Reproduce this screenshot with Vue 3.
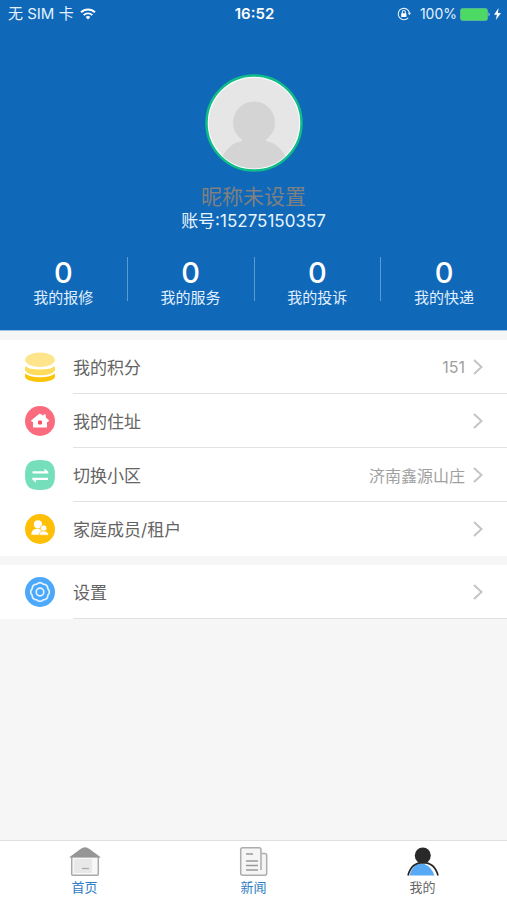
<script setup>
const stats = [
  { label: '我的报修', value: 0 },
  { label: '我的服务', value: 0 },
  { label: '我的投诉', value: 0 },
  { label: '我的快递', value: 0 },
]

const groups = [
  [
    { icon: 'coins', label: '我的积分', value: '151' },
    { icon: 'home', label: '我的住址' },
    { icon: 'swap', label: '切换小区', value: '济南鑫源山庄' },
    { icon: 'family', label: '家庭成员/租户' },
  ],
  [{ icon: 'gear', label: '设置' }],
]

const petals = Array.from({ length: 73 }, (_, i) => {
  const a = (i / 72) * Math.PI * 2
  const r = 8.4 + 0.9 * Math.abs(Math.cos(a * 4))
  return `${(15 + r * Math.sin(a)).toFixed(2)},${(15 - r * Math.cos(a)).toFixed(2)}`
}).join(' ')
</script>

<template>
  <div class="page">
    <header class="hero">
      <div class="status">
        <div class="side">
          <span>无 SIM 卡</span>
          <svg width="16" height="12" viewBox="0 0 16 12" fill="none" stroke="#fff" stroke-width="1.9">
            <path d="M1 4.3a10 10 0 0 1 14 0" />
            <path d="M3.7 7.1a6.2 6.2 0 0 1 8.600 0" />
            <path d="M8 11.6 5.6 9.1a3.4 3.4 0 0 1 4.800 0z" fill="#fff" stroke="none" />
          </svg>
        </div>
        <time class="clock">16:52</time>
        <div class="side end">
          <svg width="14" height="14" viewBox="0 0 14 14" fill="none" stroke="#e4f2ff">
            <path d="M11.2 10.8A5.7 5.7 0 1 1 12.5 6" stroke-width="1.1" />
            <path d="M10.8 5.8h3.200l-1.6 2.5z" fill="#e4f2ff" stroke="none" />
            <path d="M5.3 6.5V5a1.5 1.5 0 0 1 3 0v1.5" stroke-width="1.1" />
            <rect x="4.2" y="6.2" width="5.200" height="3.8" rx=".5" fill="#fff" stroke="none" />
          </svg>
          <span class="percent">100%</span>
          <svg width="31" height="13" viewBox="0 0 31 13">
            <rect x=".5" y=".5" width="27" height="12" rx="2" fill="#4cd964" stroke="#6fc79c" stroke-width=".6" />
            <path d="M28.6 4.3q1.9 2.2 0 4.4z" fill="#d5ebfa" />
          </svg>
          <svg width="7" height="12" viewBox="0 0 7 12">
            <path d="M4.6 0 0 6.7h2.900L1.8 12 7 4.9H3.900z" fill="#fff" />
          </svg>
        </div>
      </div>

      <svg class="avatar" width="98" height="98" viewBox="0 0 98 98" role="img" aria-label="头像">
        <defs>
          <clipPath id="face"><circle cx="49" cy="49" r="45.5" /></clipPath>
        </defs>
        <circle cx="49" cy="49" r="47.500" fill="#fff" stroke="#10bd88" stroke-width="2.500" />
        <circle cx="49" cy="49" r="45.2" fill="#e6e6e6" />
        <g clip-path="url(#face)" fill="#d4d4d4">
          <circle cx="49" cy="48.5" r="21" />
          <path d="M37 62h24v5c9 1.500 15 7 20 16v15H17V83c5-9 11-14.500 20-16z" />
        </g>
      </svg>
      <h1 class="nickname">昵称未设置</h1>
      <p class="account">账号:15275150357</p>

      <div class="stats">
        <a v-for="s in stats" :key="s.label" class="stat" href="#">
          <strong>{{ s.value }}</strong>
          <span>{{ s.label }}</span>
        </a>
      </div>
    </header>

    <main class="content">
      <nav v-for="(group, g) in groups" :key="g" class="group">
        <a v-for="item in group" :key="item.label" class="row" href="#">
          <svg width="30" height="30" viewBox="0 0 30 30">
            <g v-if="item.icon === 'coins'">
              <path d="M0 21.5Q4 25.200 15 25.200T30 21.500v3c0 3-6.500 5.500-15 5.500S0 27.500 0 24.500z" fill="#fbc50b" />
              <path d="M0 14Q4 17.500 15 17.500T30 14v3.5c0 3.500-6.500 5.800-15 5.800S0 21 0 17.500z" fill="#fddb5c" />
              <ellipse cx="15" cy="7.8" rx="14.800" ry="7.300" fill="#fee48b" />
            </g>
            <g v-else-if="item.icon === 'home'">
              <circle cx="15" cy="15" r="15" fill="#fb6b7e" />
              <path d="M14.800 7.500l3.500 2.200V8.500h2.500v2.900l3.400 3-1.200 1.600H22V21.500H8V16h-1L6 14.400z" fill="#fff" />
              <rect x="13" y="14.5" width="4" height="4" rx="1" fill="#fb5268" />
            </g>
            <g v-else-if="item.icon === 'swap'">
              <path d="M15 0c11 0 15 4 15 15s-4 15-15 15S0 26 0 15 4 0 15 0z" fill="#75debb" />
              <path d="M7.500 11.300H19.500V8.500l3.800 3.300v1.700H7.500zM23 17.700H7.300v1.700l3.800 3.300v-2.800H23z" fill="#fff" />
            </g>
            <g v-else-if="item.icon === 'family'">
              <circle cx="15" cy="15" r="15" fill="#fdbf07" />
              <g fill="#fff">
                <circle cx="13" cy="10.3" r="4.100" />
                <path d="M6.3 20.700c0-4 2.500-6 6.200-6 2.300 0 4 .8 5 2.200l-1.500 3.800z" />
                <g stroke="#fdbf07" stroke-width=".7">
                  <circle cx="18.600" cy="14.200" r="3.200" />
                  <path d="M14.2 21.200c.1-3 1.600-4.200 4.500-4.200s4.800 1.400 5 4.200z" />
                </g>
              </g>
            </g>
            <g v-else>
              <circle cx="15" cy="15" r="15" fill="#4ba8fa" />
              <polygon :points="petals" fill="none" stroke="#e4f3ff" stroke-width="1.7" />
              <circle cx="15" cy="15" r="3.8" fill="none" stroke="#e4f3ff" stroke-width="1.7" />
            </g>
          </svg>
          <span class="cell">
            <span class="label">{{ item.label }}</span>
            <span v-if="item.value" class="value">{{ item.value }}</span>
            <svg width="10" height="16" viewBox="0 0 10 16" fill="none" stroke="#c4c4c4" stroke-width="2">
              <path d="M1 1l7.5 7L1 15" />
            </svg>
          </span>
        </a>
      </nav>
    </main>

    <nav class="tabs">
      <a class="tab" href="#">
        <svg width="32" height="30" viewBox="0 0 32 30">
          <rect x="2.7" y="9.5" width="26.6" height="18.8" rx="1" fill="#f7f7f7" stroke="#a9a9a9" stroke-width="1.5" />
          <rect x="5" y="12" width="18" height="14" fill="#e8e8e8" />
          <path d="M0 10.5 11.5 2q4.500-3.500 9 0L32 10.5z" fill="#969696" />
          <path d="M13 21.500h7" stroke="#aaa" stroke-width="1.3" />
        </svg>
        <span>首页</span>
      </a>
      <a class="tab" href="#">
        <svg width="32" height="30" viewBox="0 0 32 30" fill="none" stroke="#adadad" stroke-width="1.5">
          <path d="M24 6.500h2.700q2 0 2 2v17.800q0 2-2 2H5q-2.300 0-2.300-2V2.500Q2.700.8 4.500.8h16.600q1.900 0 1.900 1.900v3.800" fill="#f5f5f5" />
          <path d="M23 6v17" />
          <path d="M8 7h7M8 14h12M8 18.500h12M8 23h12" stroke="#999" />
        </svg>
        <span>新闻</span>
      </a>
      <a class="tab current" href="#" aria-current="page">
        <svg width="32" height="30" viewBox="0 0 32 30">
          <path d="M2.500 28.500C5 20 9 16.500 15 16.500c7 0 11 5 13 12z" fill="#58a9f5" />
          <path d="M18 16.800c5 1.500 8.200 5.500 10 11.700" fill="none" stroke="#fff" stroke-width="1.300" />
          <path d="M1 28.500C3.500 19 9 15.700 16 15.700S28.500 19 31 28.500" fill="none" stroke="#252525" stroke-width="1.700" />
          <circle cx="15.8" cy="8.500" r="8" fill="#292929" />
        </svg>
        <span>我的</span>
      </a>
    </nav>
  </div>
</template>

<style>
body {
  margin: 0;
}
</style>

<style scoped>
.page {
  display: flex;
  flex-direction: column;
  min-height: 100vh;
  background: #f6f6f6;
  color: #646464;
  font-family: Inter, "Noto Sans CJK SC", sans-serif;
}

a {
  color: inherit;
  text-decoration: none;
}

svg {
  display: block;
  flex: none;
}

.hero {
  display: flex;
  flex-direction: column;
  align-items: center;
  background: #1068b8;
  border-bottom: 1px solid #9fc3e3;
  color: #fff;
}

.status {
  display: flex;
  align-items: center;
  align-self: stretch;
  height: 28px;
  padding: 0 6px 0 8px;
  font-size: 15px;
  line-height: 28px;
}

.side {
  display: flex;
  flex: 1;
  align-items: center;
  gap: 6px;
  color: #e4f2ff;
}

.end {
  justify-content: flex-end;
  gap: 3px;
}

.percent {
  padding-left: 6px;
  font-size: 14px;
}

.clock {
  font-weight: 600;
}

.avatar {
  margin-top: 46px;
}

.nickname {
  margin: 12px 0 0;
  color: #7f8082;
  font-size: 21px;
  font-weight: 400;
  line-height: 26px;
}

.account {
  margin: 0;
  color: #e8f5ff;
  font-size: 17px;
  line-height: 22px;
}

.stats {
  display: grid;
  grid-template-columns: repeat(4, 1fr);
  align-self: stretch;
  margin: 25px 0 29px;
}

.stat {
  display: flex;
  flex-direction: column;
  align-items: center;
  height: 44px;
}

.stat + .stat {
  border-left: 1px solid #5d9ad0;
}

.stat strong {
  font-size: 29px;
  font-weight: 500;
  line-height: 32px;
}

.stat span {
  color: #e0f0ff;
  font-size: 15px;
  line-height: 17px;
}

.content {
  display: flex;
  flex: 1;
  flex-direction: column;
  gap: 9px;
  padding-top: 9px;
}

.group {
  background: #fff;
}

.row {
  display: flex;
  align-items: center;
  gap: 18px;
  padding-left: 25px;
}

.cell {
  display: flex;
  flex: 1;
  align-items: center;
  gap: 8px;
  height: 53px;
  padding-right: 24px;
  border-bottom: 1px solid #e2e2e2;
  font-size: 17px;
}

.row:last-child:not(:first-child) .cell {
  border-color: #fff;
}

.label {
  flex: 1;
}

.value {
  color: #a0a0a0;
  font-size: 16px;
}

.tabs {
  display: grid;
  grid-template-columns: repeat(3, 1fr);
  background: #fff;
  border-top: 1px solid #e0e0e0;
}

.tab {
  display: flex;
  flex-direction: column;
  align-items: center;
  height: 59px;
  padding-top: 6px;
  box-sizing: border-box;
  color: #2f7dc3;
  font-size: 13px;
  line-height: 20px;
}

.current {
  color: #666;
}
</style>
